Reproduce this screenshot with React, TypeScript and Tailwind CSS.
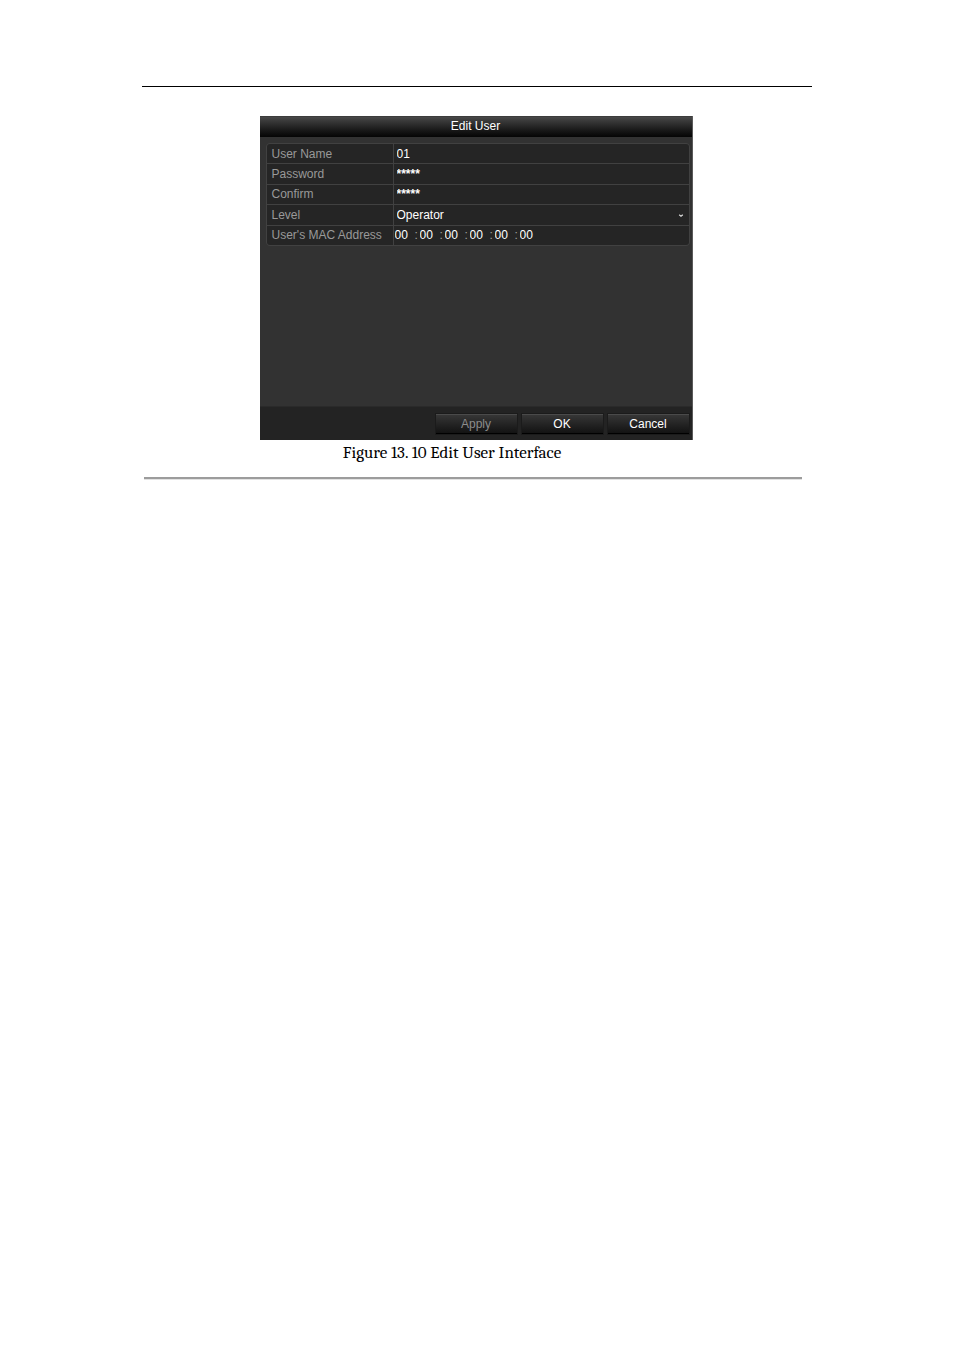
import { useState, type ReactNode } from 'react';

const inputCls = 'w-full min-w-0 h-full bg-transparent border-0 p-0 pl-[3px] text-[12px] text-white outline-none';
const buttonCls = 'w-[81px] h-5 text-[12px] leading-none border-t border-b border-t-[#4a4a4a] border-b-black bg-linear-to-b from-[#363636] to-[#131313] outline outline-[#1b1b1b]';

function Row({ label, id, children }: { label: string; id: string; children: ReactNode }) {
  return (
    <div className="grid grid-cols-[126px_1fr] gap-px min-h-0">
      <label htmlFor={id} className="bg-[#252525] pl-[5px] flex items-center text-[12px] text-[#999999] whitespace-nowrap overflow-hidden">{label}</label>
      <div className="relative bg-[#252525] flex items-center min-w-0 overflow-hidden">{children}</div>
    </div>
  );
}

function EditUserDialog() {
  const [name, setName] = useState('01');
  const [password, setPassword] = useState('*****');
  const [confirm, setConfirm] = useState('*****');
  const [mac, setMac] = useState(['00', '00', '00', '00', '00', '00']);

  const setOctet = (i: number, v: string) => setMac(mac.map((m, n) => (n === i ? v : m)));

  return (
    <form onSubmit={e => e.preventDefault()} className="w-full max-w-[433px] mx-auto bg-[#323232] border-r border-[#5a5a5a] flex flex-col font-['Liberation_Sans',Arial,sans-serif]">
      <h1 className="h-[21px] pb-[3px] flex items-center justify-center text-[12px] text-white border-t border-[#3c3c3c] bg-linear-to-b from-[#484848] to-[#050505]">Edit User</h1>

      {/* Fields */}
      <div className="mt-[6px] ml-[6px] mr-[2px] h-[103px] grid auto-rows-fr gap-px rounded border border-[#414141] bg-[#414141] overflow-hidden">
        <Row label="User Name" id="name"><input id="name" className={inputCls} value={name} onChange={e => setName(e.target.value)} /></Row>
        <Row label="Password" id="password"><input id="password" className={`${inputCls} font-bold`} value={password} onChange={e => setPassword(e.target.value)} /></Row>
        <Row label="Confirm" id="confirm"><input id="confirm" className={`${inputCls} font-bold`} value={confirm} onChange={e => setConfirm(e.target.value)} /></Row>
        <Row label="Level" id="level">
          <select id="level" className={`${inputCls} appearance-none`} defaultValue="Operator">
            <option>Operator</option>
            <option>Guest</option>
          </select>
          <svg className="absolute right-[5px] top-[9px] pointer-events-none" width="6" height="4" viewBox="0 0 6 4" fill="none" stroke="#dcdcdc" strokeWidth="1.3"><path d="M1.2.8 3 2.2 4.8.8" /></svg>
        </Row>
        <Row label="User's MAC Address" id="mac-0">
          <div className="flex items-center pl-px text-[12px] text-white">
            {mac.map((m, i) => (
              <div key={i} className="flex items-center">
                {i > 0 && <span className="w-[5px] text-[#a0a0a0]">:</span>}
                <input id={`mac-${i}`} aria-label={i > 0 ? `MAC part ${i + 1}` : undefined} maxLength={2} className="w-5 p-0 bg-transparent border-0 outline-none" value={m} onChange={e => setOctet(i, e.target.value)} />
              </div>
            ))}
          </div>
        </Row>
      </div>

      {/* Buttons */}
      <div className="mt-[160px] h-[34px] flex items-center justify-end gap-[5px] pr-[3px] bg-[#232323] border-t border-[#2a2a2a]">
        <button type="button" className={`${buttonCls} text-[#8c8c8c]`}>Apply</button>
        <button type="submit" className={`${buttonCls} text-white`}>OK</button>
        <button type="button" className={`${buttonCls} text-white`}>Cancel</button>
      </div>
    </form>
  );
}

export default function App() {
  return (
    <main className="min-h-screen bg-white px-[142px] pt-[86px]">
      <hr className="border-t border-black" />
      <figure className="pt-[29px] pr-[2px]">
        <EditUserDialog />
        <figcaption className="pr-12 pt-px text-center text-[17px] leading-6 text-black font-['Cambria','Liberation_Serif',serif]">Figure 13. 10 Edit User Interface</figcaption>
      </figure>
      <hr className="ml-[2px] mr-[10px] mt-[12px] border-t-2 border-b border-t-[#9c9c9c] border-b-[#e2e2e2]" />
    </main>
  );
}
